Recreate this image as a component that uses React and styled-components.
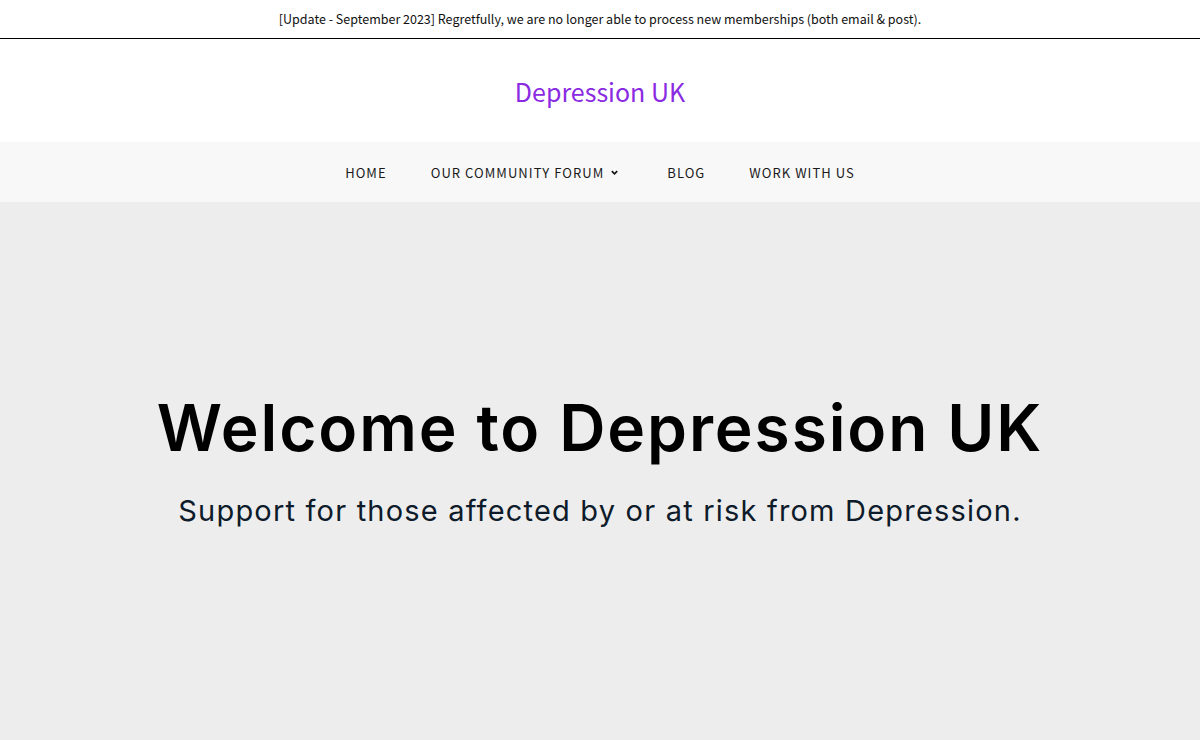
import React from "react";
import styled, { createGlobalStyle } from "styled-components";

const Global = createGlobalStyle`
  html, body { margin: 0; padding: 0; background: #ededed; }
  body { font-family: "Noto Sans", sans-serif; }
`;

const Page = styled.div`
  display: flex;
  flex-direction: column;
  min-height: 740px;
`;

const Notice = styled.div`
  height: 39px;
  box-sizing: border-box;
  padding-bottom: 2px;
  border-bottom: 1px solid #000;
  background: #fff;
  display: flex;
  align-items: center;
  justify-content: center;
  font-family: "Noto Sans CJK SC", "Noto Sans", sans-serif;
  font-size: 12.5px;
  color: #111;
`;

const Header = styled.header`
  height: 103px;
  background: #fff;
  display: flex;
  align-items: center;
  justify-content: center;
`;

const SiteTitle = styled.a`
  font-family: "Noto Sans CJK SC", "Noto Sans", sans-serif;
  font-size: 25px;
  color: #8a2be2;
  text-decoration: none;
`;

const Nav = styled.nav`
  height: 60px;
  background: #f8f8f8;
  display: flex;
  align-items: center;
  justify-content: center;
`;

const NavItem = styled.a`
  font-family: "Noto Sans CJK SC", "Noto Sans", sans-serif;
  font-size: 13px;
  letter-spacing: 1.05px;
  color: #1a1a1a;
  text-decoration: none;
  padding: 0 22px;
  display: flex;
  align-items: center;
  gap: 6px;
  margin-right: ${(p) => (p.$extra ? "4px" : "0")};
`;

const Hero = styled.section`
  flex: 1;
  background: #ededed;
  display: flex;
  flex-direction: column;
  align-items: center;
  padding-top: 188px;
`;

const Heading = styled.h1`
  margin: 0;
  font-family: "Inter", sans-serif;
  font-weight: 600;
  font-size: 64px;
  line-height: 1.2;
  color: #000;
  letter-spacing: 1.9px;
`;

const Sub = styled.p`
  margin: 27px 0 0;
  font-family: "Inter", sans-serif;
  font-size: 29px;
  line-height: 1.2;
  letter-spacing: 1.2px;
  color: #0d1b2a;
`;

const Chevron = () => (
  <svg width="9" height="9" viewBox="0 0 10 10" aria-hidden="true">
    <path d="M2 3.5 L5 6.5 L8 3.5" fill="none" stroke="#111" strokeWidth="1.8" />
  </svg>
);

export default function App() {
  return (
    <>
      <Global />
      <Page>
        <Notice>
          [Update - September 2023] Regretfully, we are no longer able to process new memberships (both email &amp; post).
        </Notice>
        <Header>
          <SiteTitle href="#">Depression UK</SiteTitle>
        </Header>
        <Nav>
          <NavItem href="#">HOME</NavItem>
          <NavItem href="#" $extra>
            OUR COMMUNITY FORUM <Chevron />
          </NavItem>
          <NavItem href="#">BLOG</NavItem>
          <NavItem href="#">WORK WITH US</NavItem>
        </Nav>
        <Hero>
          <Heading>Welcome to Depression UK</Heading>
          <Sub>Support for those affected by or at risk from Depression.</Sub>
        </Hero>
      </Page>
    </>
  );
}
